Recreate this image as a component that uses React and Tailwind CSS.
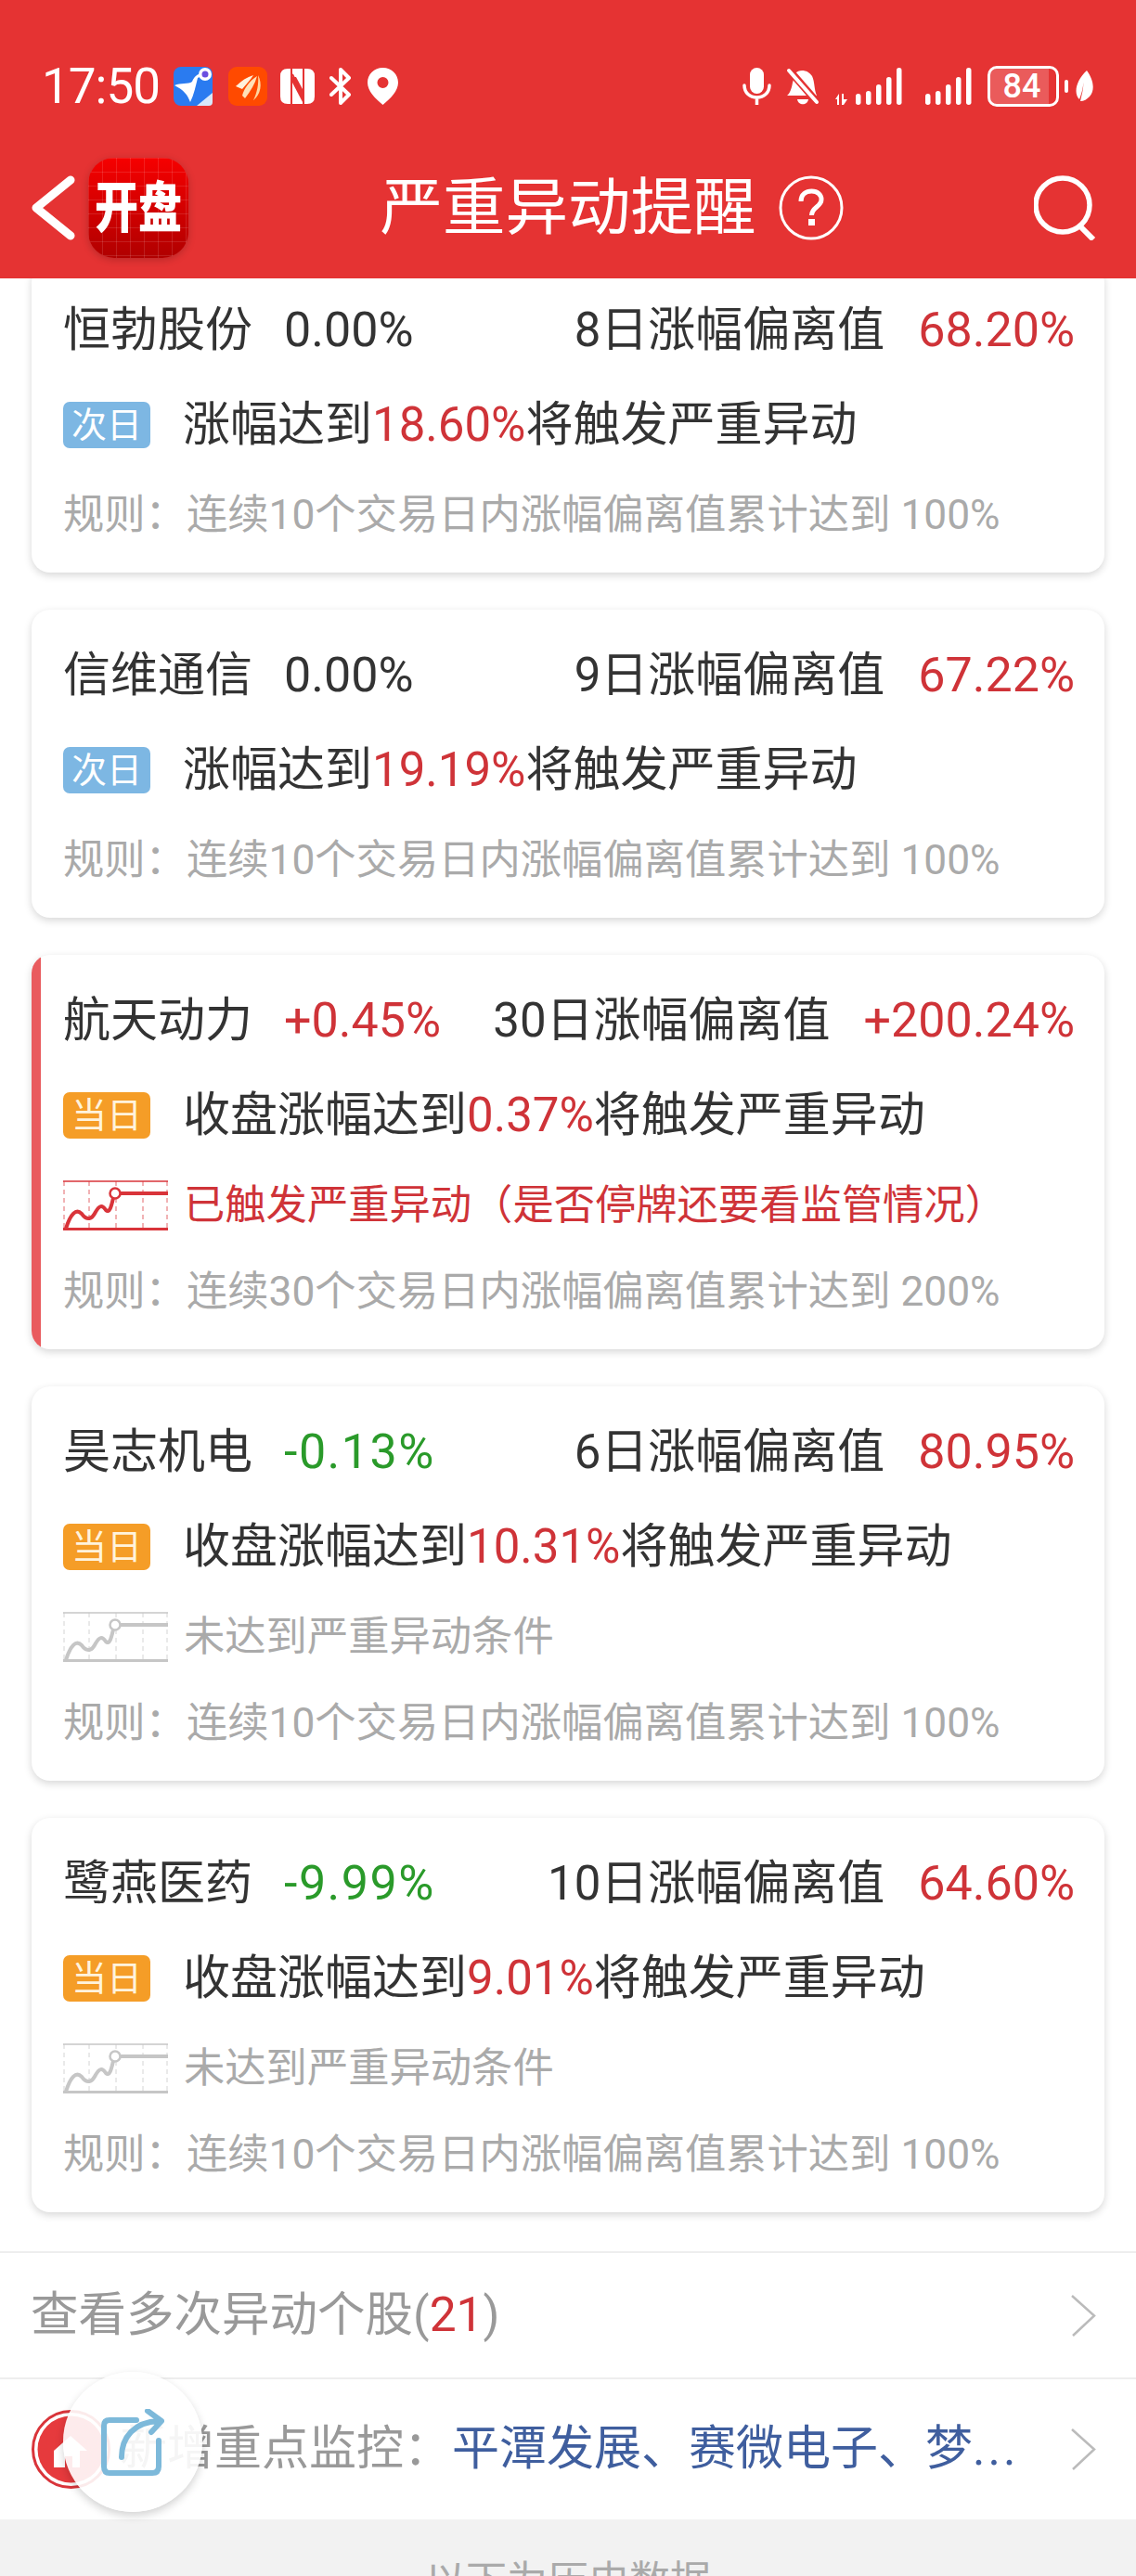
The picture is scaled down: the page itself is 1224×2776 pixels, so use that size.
const FONT = "font-['Roboto','Noto_Sans_CJK_SC',sans-serif]";

const cards = [
  {
    name: "恒勃股份", change: "0.00%", changeColor: "text-[#333333]", label: "8日涨幅偏离值", value: "68.20%",
    badge: "次日", before: "涨幅达到", target: "18.60%", rule: "连续10个交易日内涨幅偏离值累计达到 100%",
  },
  {
    name: "信维通信", change: "0.00%", changeColor: "text-[#333333]", label: "9日涨幅偏离值", value: "67.22%",
    badge: "次日", before: "涨幅达到", target: "19.19%", rule: "连续10个交易日内涨幅偏离值累计达到 100%",
  },
  {
    name: "航天动力", change: "+0.45%", changeColor: "text-[#CF3338]", label: "30日涨幅偏离值", value: "+200.24%",
    badge: "当日", before: "收盘涨幅达到", target: "0.37%", triggered: true, status: "已触发严重异动（是否停牌还要看监管情况）",
    rule: "连续30个交易日内涨幅偏离值累计达到 200%",
  },
  {
    name: "昊志机电", change: "-0.13%", changeColor: "text-[#2A9A2A] tracking-[1.5px]", label: "6日涨幅偏离值", value: "80.95%",
    badge: "当日", before: "收盘涨幅达到", target: "10.31%", status: "未达到严重异动条件", rule: "连续10个交易日内涨幅偏离值累计达到 100%",
  },
  {
    name: "鹭燕医药", change: "-9.99%", changeColor: "text-[#2A9A2A] tracking-[1.5px]", label: "10日涨幅偏离值", value: "64.60%",
    badge: "当日", before: "收盘涨幅达到", target: "9.01%", status: "未达到严重异动条件", rule: "连续10个交易日内涨幅偏离值累计达到 100%",
  },
];

function TrendIcon({ active }) {
  const c = active ? "#D9343A" : "#C6C6C6";
  return (
    <svg width="113" height="54" viewBox="0 0 113 54" fill="none" className="shrink-0">
      <path d="M28 1V53M57 1V53M86 1V53M1 1V53M112 1V53" stroke={c} strokeWidth="1" strokeDasharray="5 4" opacity="0.75" />
      <path d="M0 1H113" stroke={c} strokeWidth="1.5" />
      <path d="M0 52.5H113" stroke={c} strokeWidth="3" />
      <path d="M3 52C8 36 14 30 20 36C26 44 31 42 35 34C39 27 42 26 46 32C50 36 52 28 54 19" stroke={c} strokeWidth="4" strokeLinecap="round" />
      <path d="M62 14H113" stroke={c} strokeWidth="4" />
      <circle cx="56" cy="14" r="5.5" stroke={c} strokeWidth="2.5" fill="#fff" />
    </svg>
  );
}

function Card({ card }) {
  return (
    <div className="flex overflow-hidden rounded-[20px] bg-white shadow-[0_3px_8px_rgba(0,0,0,0.16)]">
      {card.triggered && <div className="w-[10px] shrink-0 bg-[#E95B5E]" />}
      <div className={`flex-1 pt-[41px] pr-[32px] pb-[32px] ${card.triggered ? "pl-[24px]" : "pl-[34px]"}`}>
        <div className="flex h-[60px] items-center text-[51px] leading-[60px] text-[#333333]">
          <span>{card.name}</span>
          <span className={`ml-[34px] text-[52px] ${card.changeColor}`}>{card.change}</span>
          <span className="ml-auto">{card.label}</span>
          <span className="ml-[36px] text-[52px] text-[#CF3338]">{card.value}</span>
        </div>
        <div className="mt-[42px] flex h-[60px] items-center text-[51px] leading-[60px] text-[#333333]">
          <span
            className={`mr-[35px] flex h-[50px] w-[94px] items-center justify-center rounded-[7px] text-[38px] leading-none ${
              card.badge === "次日" ? "bg-[#7DB7E3] text-white" : "bg-[#F59D27] text-[#FFF3DC]"
            }`}
          >
            {card.badge}
          </span>
          <span>
            {card.before}
            <span className="text-[#CF3338]">{card.target}</span>将触发严重异动
          </span>
        </div>
        {card.status && (
          <div className={`mt-[37px] flex h-[60px] items-center text-[44.3px] leading-[60px] ${card.triggered ? "text-[#CF3338]" : "text-[#AAAAAA]"}`}>
            <TrendIcon active={card.triggered} />
            <span className="ml-[17px]">{card.status}</span>
          </div>
        )}
        <div className={`${card.status ? "mt-[33px]" : "mt-[37px]"} h-[60px] text-[44.3px] leading-[60px] text-[#AAAAAA]`}>
          规则：{card.rule}
        </div>
      </div>
    </div>
  );
}

function Chevron() {
  return (
    <svg width="27" height="45" viewBox="0 0 27 45" fill="none" className="shrink-0">
      <path d="M1 1L25 22.5L2 44" stroke="#BBBBBB" strokeWidth="2.5" />
    </svg>
  );
}

function StatusBar() {
  return (
    <div className="flex h-[44px] items-center pl-[45px] pr-[45px] text-white">
      <span className="w-[127px] text-[53px] leading-none tracking-[-1px]">17:50</span>
      <svg width="42" height="42" viewBox="0 0 42 42" className="ml-[15px]">
        <rect width="42" height="42" rx="8" fill="#2A7BF0" />
        <path d="M1 20C8 17 16 19 20 16C23 9 28 6 32 9L26 12C24 20 22 30 18 38C15 30 11 25 1 20Z" fill="#fff" />
        <circle cx="34" cy="8" r="7" fill="#fff" />
        <circle cx="34" cy="8" r="3.5" fill="#6A4FE0" />
        <path d="M25 42L42 28V38Q42 42 38 42Z" fill="#D8E8FB" />
      </svg>
      <svg width="42" height="42" viewBox="0 0 42 42" className="ml-[17px]">
        <rect width="42" height="42" rx="9" fill="#FF4A00" />
        <path d="M8 21C14 15 20 11 27 9C24 14 19 19 15 24Z" fill="#FFF1DC" />
        <path d="M15 31C17 23 23 15 31 10C29 18 24 26 18 34Z" fill="#FFE0B8" />
        <path d="M27 36C31 28 33 18 32 9C37 18 35 30 27 36Z" fill="#FFD6A0" />
      </svg>
      <svg width="37" height="38" viewBox="0 0 37 38" className="ml-[14px]">
        <path d="M8 0H11V38H8Q0 38 0 30V8Q0 0 8 0ZM26 0H29Q37 0 37 8V30Q37 38 29 38H26Z" fill="#fff" />
        <path d="M13 0H24V22L17 9H13ZM13 15L24 36V38H13Z" fill="#fff" />
        <path d="M13 6L24 28" stroke="#E53333" strokeWidth="2" />
      </svg>
      <svg width="25" height="40" viewBox="0 0 25 40" fill="none" className="ml-[16px]">
        <path d="M2 29L21 11L12 2V38L21 29L2 11" stroke="#fff" strokeWidth="4" strokeLinejoin="round" strokeLinecap="round" />
      </svg>
      <svg width="33" height="40" viewBox="0 0 33 40" className="ml-[16px]">
        <path fillRule="evenodd" d="M16.5 0C26 0 33 7 33 16C33 25 25 33 16.5 40C8 33 0 25 0 16C0 7 7 0 16.5 0ZM16.5 10A6 6 0 1 0 16.5 22A6 6 0 1 0 16.5 10Z" fill="#fff" />
      </svg>

      <svg width="31" height="40" viewBox="0 0 31 40" fill="none" className="ml-auto">
        <rect x="8" y="0" width="15" height="28" rx="7.5" fill="#fff" />
        <path d="M2 19C2 27 8 32 15.5 32C23 32 29 27 29 19M15.5 32V40" stroke="#fff" strokeWidth="3.5" strokeLinecap="round" />
      </svg>
      <svg width="36" height="40" viewBox="0 0 36 40" fill="none" className="ml-[16px]">
        <path d="M10 6C14 1 24 2 28 9C31 15 30 24 33 30H1C4 28 6 22 7 16Z" fill="#fff" />
        <path d="M12 34H24C23 41 13 41 12 34Z" fill="#fff" />
        <path d="M2 1L35 39" stroke="#E53333" strokeWidth="8" />
        <path d="M3 3L33 37" stroke="#fff" strokeWidth="4" strokeLinecap="round" />
      </svg>
      <svg width="73" height="40" viewBox="0 0 73 40" fill="#fff" className="ml-[16px]">
        <path d="M1 34L5 28V40H3V34ZM8 28H10V34L14 34L10 40H8Z" />
        <rect x="23" y="28" width="5.5" height="12" rx="2.7" />
        <rect x="34" y="25" width="5.5" height="15" rx="2.7" />
        <rect x="45" y="18" width="5.5" height="22" rx="2.7" />
        <rect x="56" y="10" width="5.5" height="30" rx="2.7" />
        <rect x="67" y="0" width="5.5" height="40" rx="2.7" />
      </svg>
      <svg width="50" height="40" viewBox="0 0 50 40" fill="#fff" className="ml-[25px]">
        <rect x="0" y="28" width="5.5" height="12" rx="2.7" />
        <rect x="11" y="25" width="5.5" height="15" rx="2.7" />
        <rect x="22" y="18" width="5.5" height="22" rx="2.7" />
        <rect x="33" y="10" width="5.5" height="30" rx="2.7" />
        <rect x="44" y="0" width="5.5" height="40" rx="2.7" />
      </svg>
      <div className="ml-[17px] flex h-[44px] w-[77px] overflow-hidden rounded-[10px] border-[3px] border-white">
        <div className="flex w-[63px] items-center justify-center bg-white/20 pl-[5px] text-[36px] font-medium leading-none">84</div>
      </div>
      <div className="ml-[6px] h-[14px] w-[4px] rounded-full bg-white" />
      <svg width="21" height="34" viewBox="0 0 21 34" className="ml-[7px]">
        <path d="M13 0C19 8 23 20 16 28C13 31 10 33 6 33C8 24 10 18 9 11C10 17 7 26 5 31C-2 24 2 10 13 0Z" fill="#fff" />
      </svg>
    </div>
  );
}

function NavBar() {
  return (
    <div className="mt-[55px] grid grid-cols-[1fr_auto_1fr] items-center px-[34px]">
      <div className="flex items-center">
        <svg width="47" height="70" viewBox="0 0 47 70" fill="none">
          <path d="M42 5L5 35L42 65" stroke="#fff" strokeWidth="9" strokeLinecap="round" strokeLinejoin="round" />
        </svg>
        <div className="ml-[14px] flex h-[108px] w-[108px] items-center justify-center rounded-[28px] bg-[linear-gradient(rgba(255,255,255,0.12)_1px,transparent_1px),linear-gradient(90deg,rgba(255,255,255,0.12)_1px,transparent_1px),linear-gradient(180deg,#F60000,#B00000)] bg-[size:15px_15px,15px_15px,100%_100%] shadow-[0_2px_8px_rgba(0,0,0,0.2)]">
          <span className="scale-y-125 text-[47px] font-black leading-none text-white">开盘</span>
        </div>
      </div>
      <div className="text-[67.5px] leading-[80px] text-white">严重异动提醒</div>
      <div className="flex items-center justify-between pl-[24px] pr-[9px]">
        <svg width="70" height="70" viewBox="0 0 70 70" fill="none">
          <circle cx="35" cy="35" r="33" stroke="#fff" strokeWidth="3" />
          <path d="M24 28C24 20 30 17 35.5 17C42 17 46 21 46 26C46 34 35.5 34 35.5 43" stroke="#fff" strokeWidth="5" />
          <rect x="32" y="47" width="7" height="7" fill="#fff" />
        </svg>
        <svg width="67" height="70" viewBox="0 0 67 70" fill="none">
          <circle cx="31" cy="32" r="29" stroke="#fff" strokeWidth="5.5" />
          <path d="M50 55L64 69" stroke="#fff" strokeWidth="6" />
        </svg>
      </div>
    </div>
  );
}

function FloatingShare() {
  return (
    <div className="absolute left-[68px] top-[2556px] z-20 flex h-[151px] w-[150px] items-center justify-center rounded-full bg-white/90 shadow-[0_4px_10px_rgba(0,0,0,0.18)]">
      <svg width="68" height="72" viewBox="0 0 68 72" fill="none">
        <path d="M38 12H9Q3 12 3 18V62Q3 69 9 69H55Q62 69 62 62V34" stroke="#7DB9DA" strokeWidth="6" strokeLinecap="round" />
        <path d="M22 52C22 30 36 14 62 13M50 2L65 13L54 25" stroke="#7DB9DA" strokeWidth="6" strokeLinecap="round" strokeLinejoin="round" />
      </svg>
    </div>
  );
}

export default function App() {
  return (
    <div className={`relative h-[2776px] w-[1224px] overflow-hidden bg-white ${FONT}`}>
      <header className="relative z-10 h-[300px] bg-[#E53333] pt-[71px]">
        <StatusBar />
        <NavBar />
      </header>

      <main className="-mt-[15px] flex flex-col gap-[40px] px-[34px] pb-[42px]">
        {cards.map((card) => (
          <Card key={card.name} card={card} />
        ))}
      </main>

      <div className="flex h-[136px] items-center justify-between border-t-2 border-[#EEEEEE] pl-[33px] pr-[43px] text-[51.5px] text-[#999999]">
        <span>
          查看多次异动个股(<span className="text-[#CF3338]">21</span>)
        </span>
        <Chevron />
      </div>

      <div className="flex h-[153px] items-center border-t-2 border-[#EEEEEE] pl-[34px] pr-[43px] text-[51px]">
        <svg width="85" height="85" viewBox="0 0 85 85" className="shrink-0">
          <circle cx="42.5" cy="42.5" r="41" fill="#fff" stroke="#D9343A" strokeWidth="3" />
          <circle cx="42.5" cy="42.5" r="36" fill="#E63A3D" />
          <path d="M24 44L42 28L60 44H52V62H44V50H36V62H24Z" fill="#fff" />
        </svg>
        <span className="ml-[10px] text-[#999999]">新增重点监控：</span>
        <span className="ml-[1px] text-[#3F5E9E]">
          平潭发展、赛微电子、梦<span className="tracking-[3px]">...</span>
        </span>
        <span className="ml-auto">
          <Chevron />
        </span>
      </div>

      <div className="h-[200px] bg-[#F2F2F2] pt-[37px] text-center text-[44px] leading-[60px] text-[#AAAAAA]">以下为历史数据</div>

      <FloatingShare />
    </div>
  );
}
